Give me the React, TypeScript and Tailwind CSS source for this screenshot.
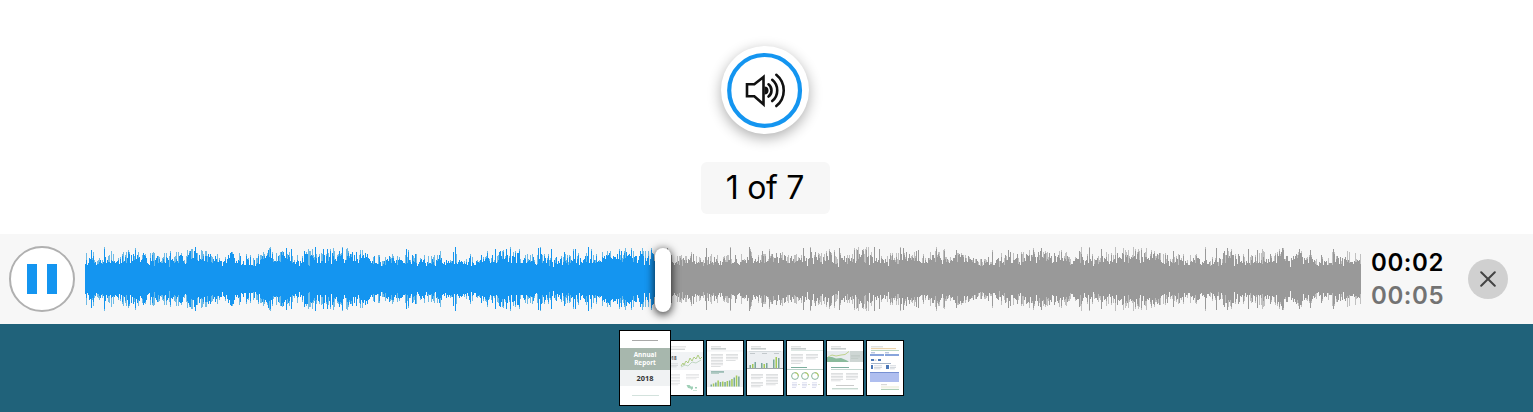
import React from "react";

const WAVE_W = 1276;
const WAVE_H = 66;

function seeded(seed: number) {
  let s = seed;
  return () => {
    s = (s * 1664525 + 1013904223) % 4294967296;
    return s / 4294967296;
  };
}

function buildWave() {
  const rnd = seeded(20187);
  const mid = WAVE_H / 2;
  let solid = "";
  let soft = "";
  let base = 20;
  for (let x = 0; x < WAVE_W; x++) {
    base += (rnd() - 0.5) * 4;
    base = Math.max(16, Math.min(23, base));
    const r = rnd();
    let a = base + (rnd() - 0.5) * 6;
    if (r < 0.05) a = 12 + rnd() * 5;
    else if (r < 0.15) a = 15 + rnd() * 3;
    else if (r > 0.95) a = 27 + rnd() * 5;
    else if (r > 0.76) a = base + 3 + rnd() * 5;
    a = Math.min(32, Math.round(a));
    solid += `M${x} ${mid - a}h1v${2 * a}h-1z`;
    if (rnd() < 0.36) {
      const b = Math.min(32, Math.round(Math.max(a + 2, base + rnd() * 9)));
      soft += `M${x} ${mid - b}h1v${2 * b}h-1z`;
    }
  }
  return { solid, soft };
}

const WAVE = buildWave();

function Waveform() {
  return (
    <div className="relative ml-[10px] h-[66px] w-[1276px] shrink-0">
      <svg className="block" width={WAVE_W} height={WAVE_H} viewBox="0 0 1276 66" shapeRendering="crispEdges">
        <defs>
          <clipPath id="played"><rect x="0" y="0" width="578" height="66" /></clipPath>
          <clipPath id="rest"><rect x="578" y="0" width="698" height="66" /></clipPath>
        </defs>
        <g clipPath="url(#played)">
          <path d={WAVE.soft} fill="#6fbbe6" />
          <path d={WAVE.solid} fill="#1495f0" />
        </g>
        <g clipPath="url(#rest)">
          <path d={WAVE.soft} fill="#c0c0c0" />
          <path d={WAVE.solid} fill="#999999" />
        </g>
      </svg>
      <div className="absolute left-[570px] top-[2px] h-[64px] w-[16px] rounded-full bg-white shadow-[0_2px_8px_1px_rgba(0,0,0,0.75)]" />
    </div>
  );
}

function Lines({ x, y, w, n, c = "#b9bcbf" }: { x: number; y: number; w: number; n: number; c?: string }) {
  return (
    <>
      {Array.from({ length: n }, (_, i) => (
        <rect key={i} x={x} y={y + i * 1.5} width={i === n - 1 ? w * 0.8 : w} height="0.7" fill={c} opacity="0.65" />
      ))}
    </>
  );
}

function Heading() {
  return (
    <>
      <rect x="4" y="5.6" width="10" height="0.6" fill="#b5b8ba" />
      <rect x="4" y="7.5" width="15" height="0.8" fill="#94a09f" />
    </>
  );
}

function Bars({ x, y, hs, step }: { x: number; y: number; hs: number[]; step: number }) {
  return (
    <>
      {hs.map((h, i) => (
        <rect key={i} x={x + i * step} y={y - h} width="1.5" height={h} fill={i % 2 ? "#a3ca55" : "#79a89a"} />
      ))}
    </>
  );
}

function Page({ children }: { children: React.ReactNode }) {
  return (
    <div className="h-[56px] w-[38px] shrink-0 border border-black bg-white">
      <svg className="block" width="36" height="54" viewBox="0 0 36 54">{children}</svg>
    </div>
  );
}

function Cover() {
  return (
    <div className="relative z-10 flex h-[76px] w-[52px] shrink-0 flex-col border border-black bg-white text-center font-['Noto_Sans','Open_Sans',sans-serif]">
      <div className="h-[17px] pt-[9px]">
        <div className="mx-auto h-px w-[26px] bg-[#a9a9a9]" />
      </div>
      <div className="h-[22px] bg-[#a7b7ad] pt-[3px] text-[6.4px] font-bold leading-[8px] text-white">
        Annual<br />Report
      </div>
      <div className="h-[16px] bg-[#f0f2f3] text-[7.4px] font-bold leading-[16px] text-[#333]">2018</div>
      <div className="mx-auto mt-[9px] h-px w-[27px] bg-[#d3e2dd]" />
    </div>
  );
}

function Thumbnails() {
  return (
    <div className="flex h-[88px] items-center bg-[#20627a] pl-[619px]">
      <Cover />
      <div className="-ml-[5px] flex gap-[2px]">
        <Page>
          <rect x="4" y="5.6" width="15" height="0.6" fill="#c0c2c4" />
          <rect x="4" y="7.8" width="14" height="0.7" fill="#a9afb0" />
          <rect y="11" width="36" height="18" fill="#f1f3f5" />
          <text x="-1" y="19.2" fontSize="4.6" fontWeight="700" fill="#555" fontFamily="Noto Sans, sans-serif">2018</text>
          <path d="M14 25l2-3 1 2 2-4 2 2 2-5 2 3 2-4 2 2 2-4 2 4 2-2" fill="none" stroke="#a7c875" strokeWidth="0.9" />
          <path d="M14 26l4-2 3 1 4-4 4 1 5-3" fill="none" stroke="#9fc2a1" strokeWidth="0.6" />
          <Lines x={4} y={22.5} w={7} n={3} />
          <Lines x={4} y={33} w={9} n={8} c="#ccced0" />
          <Lines x={19} y={33} w={13} n={4} c="#ccced0" />
          <path d="M19.5 44h3l1.5 1.5h2v2l-1.5 1.5-1-1.500-2.5-.5zM28 46h2v1.5h-2zM26 49h4v.6h-4z" fill="#9fd0b7" />
        </Page>
        <Page>
          <Heading />
          <rect y="9.7" width="36" height="0.5" fill="#dde1e4" />
          <Lines x={4} y={13} w={12} n={9} />
          <Lines x={19} y={13} w={12} n={5} />
          <rect y="29" width="36" height="17" fill="#eceff2" />
          <rect x="4" y="30.5" width="13" height="0.9" fill="#4b8a78" />
          <rect x="4" y="32.3" width="8" height="0.6" fill="#91b5aa" />
          <Bars x={3.5} y={45.5} step={2.3} hs={[2, 3, 4, 6, 4.5, 5, 4.5, 5.5, 6, 7.5, 9, 11, 10]} />
        </Page>
        <Page>
          <Heading />
          <rect y="10" width="36" height="17" fill="#eceff2" />
          <rect x="2" y="10.5" width="32" height="0.5" fill="#bfc7ca" />
          <rect x="3" y="12" width="5" height="0.6" fill="#a8b0b3" />
          <rect x="15" y="12" width="5" height="0.6" fill="#a8b0b3" />
          <rect x="27" y="12" width="5" height="0.6" fill="#a8b0b3" />
          <Bars x={2.5} y={27} step={2.5} hs={[3, 4, 6]} />
          <Bars x={14} y={27} step={2.5} hs={[5, 4, 5]} />
          <Bars x={26} y={27} step={2.5} hs={[8.5, 11, 10]} />
          <rect y="27" width="36" height="0.9" fill="#969da0" />
          <Lines x={4} y={33} w={12} n={4} />
          <Lines x={19} y={33} w={12} n={8} />
          <Lines x={4} y={41} w={12} n={4} />
        </Page>
        <Page>
          <Heading />
          <rect x="4" y="9" width="32" height="0.5" fill="#bbd0c9" />
          <Lines x={4} y={13} w={12} n={7} />
          <Lines x={19} y={13} w={12} n={4} />
          <rect x="4" y="26" width="16" height="1" fill="#7caf9e" />
          <rect y="28.3" width="36" height="0.7" fill="#9bbcb0" />
          {[8, 18, 28].map((cx) => (
            <g key={cx} fill="none" strokeWidth="1">
              <circle cx={cx} cy="35" r="3.4" stroke="#8bb79c" />
              <path d={`M${cx} 31.6a3.4 3.4 0 0 1 3.4 3.4`} stroke="#b8cf5f" />
            </g>
          ))}
          {[5, 15, 25].map((x) => (
            <g key={x}>
              <Lines x={x} y={41.5} w={5} n={4} c="#b2b9dc" />
              <rect x={x + 6.5} y="43" width="1" height="1" fill="#b9cba4" />
            </g>
          ))}
        </Page>
        <Page>
          <Heading />
          <rect y="10" width="36" height="11" fill="#e8ecef" />
          <path d="M0 16h5l4 1.5 5-.5 6 2.5 2 1.5H0z" fill="#8abb9c" />
          <path d="M1 16l4-2 4 1 5-1 4-.5 4-3" fill="none" stroke="#b5cb72" strokeWidth="0.8" />
          <rect x="23" y="10" width="13" height="11" fill="#ced6d4" />
          <Lines x={24} y={14} w={9} n={3} c="#b5c0bc" />
          <rect x="4" y="26" width="18" height="1" fill="#7caf9e" />
          <rect x="4" y="28.3" width="32" height="0.6" fill="#9bbcb0" />
          <Lines x={4} y={32} w={12} n={6} />
          <Lines x={19} y={32} w={12} n={5} />
          <rect x="9" y="44.2" width="18" height="0.6" fill="#a7a7a7" />
          <rect x="5" y="47.5" width="26" height="0.7" fill="#93b5a5" />
        </Page>
        <Page>
          <rect x="4" y="5.6" width="12" height="0.6" fill="#b5b8ba" />
          <rect x="4" y="7.3" width="25" height="0.8" fill="#e3c188" />
          <rect x="4" y="9.2" width="28" height="0.6" fill="#8cbd9b" />
          <rect x="4" y="11.5" width="4" height="0.7" fill="#7891bc" />
          <rect x="18" y="11.5" width="4" height="0.7" fill="#7891bc" />
          <rect x="3" y="13" width="14" height="2" fill="#88a5dc" />
          <rect x="18" y="13" width="14" height="2" fill="#88a5dc" />
          <rect x="4" y="18" width="3" height="2" fill="#4c79b8" />
          <rect x="11" y="18" width="3" height="2" fill="#4c79b8" />
          <rect x="7.5" y="18.7" width="2" height="0.8" fill="#aaa" />
          <rect x="4" y="22" width="20" height="0.7" fill="#8298b5" />
          <rect x="4" y="24" width="2" height="4" fill="#4c79b8" />
          <rect x="19" y="24" width="3" height="4" fill="#4c79b8" />
          <Lines x={7} y={24.5} w={8} n={3} c="#a2acb9" />
          <Lines x={23} y={24.5} w={6} n={3} c="#a2acb9" />
          <rect x="3" y="31" width="29" height="10" fill="#afbeef" />
          <rect x="3" y="31" width="29" height="0.8" fill="#6a85cc" />
          <rect x="14" y="43.5" width="6" height="0.6" fill="#b3b3b3" />
          <rect x="14" y="45" width="18" height="2.5" fill="#f3f3e7" />
          <rect x="14" y="48" width="18" height="0.7" fill="#8cbd9b" />
        </Page>
      </div>
    </div>
  );
}

export default function App() {
  return (
    <div className="flex h-[412px] w-[1533px] flex-col overflow-hidden bg-white font-[Inter,sans-serif]">
      <div className="flex h-[234px] flex-col items-center pr-[3px] pt-[46px]">
        <button className="flex size-[88px] shrink-0 items-center justify-center rounded-full bg-white shadow-[0_4px_14px_rgba(0,0,0,0.32)]">
          <svg width="76" height="76" viewBox="0 0 76 76" fill="none">
            <circle cx="37.6" cy="38.4" r="35.4" stroke="#1495f0" strokeWidth="4.2" />
            <g stroke="#111" strokeWidth="2.6">
              <path d="M20 32.3h7.3l9.2-7.3v27.4l-9.2-8.2H20z" />
              <path d="M41.5 32.3a7.7 7.7 0 0 1 0 12.2M45.2 27.8a13.7 13.7 0 0 1 0 21.2M49.3 22.8a20.1 20.1 0 0 1 0 31.2" strokeLinecap="round" />
            </g>
            <path d="M37.5 34.400a4 4 0 0 1 0 8z" fill="#111" />
          </svg>
        </button>
        <div className="mt-[28px] flex h-[52px] w-[129px] shrink-0 items-center justify-center rounded-[6px] bg-[#f7f7f7] text-[32px] leading-none tracking-[-0.3px] text-black">
          1 of 7
        </div>
      </div>

      <div className="flex h-[90px] shrink-0 items-center bg-[#f7f7f7] pl-[9px]">
        <button className="flex size-[66px] shrink-0 items-center justify-center gap-[10px] rounded-full border-2 border-[#b0b0b0] bg-white">
          <span className="h-[30px] w-[10px] bg-[#1495f0]" />
          <span className="h-[30px] w-[10px] bg-[#1495f0]" />
        </button>
        <Waveform />
        <div className="ml-[10px] w-[73px] shrink-0 text-[24px] font-semibold leading-[33px] tracking-[0.6px]">
          <div className="text-black">00:02</div>
          <div className="text-[#737373]">00:05</div>
        </div>
        <button className="ml-[24px] flex size-[40px] shrink-0 items-center justify-center rounded-full bg-[#d0d0d0]">
          <svg width="16" height="16" viewBox="0 0 16 16" stroke="#444" strokeWidth="2" strokeLinecap="round">
            <path d="M1.2 1.2l13.6 13.6M14.8 1.2L1.2 14.8" />
          </svg>
        </button>
      </div>
      <Thumbnails />
    </div>
  );
}
